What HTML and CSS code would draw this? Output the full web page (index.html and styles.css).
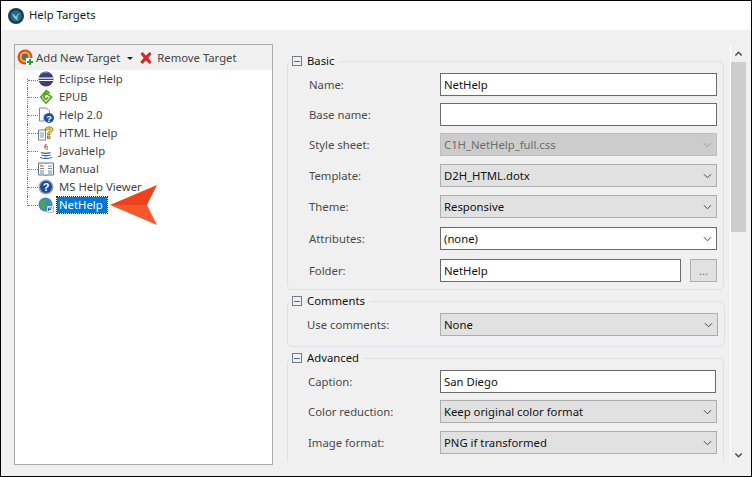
FILE: index.html
```html
<!DOCTYPE html>
<html lang="en">
<head>
<meta charset="utf-8">
<title>Help Targets</title>
<link rel="stylesheet" href="styles.css">
</head>
<body>
<div class="window">
  <header class="titlebar">
    <svg class="logo" viewBox="0 0 16 16"><circle cx="8" cy="8" r="8" fill="#123f5e"/><circle cx="8" cy="8" r="5.6" fill="#2a6a80"/><path d="M4 5.500C5 9 7 11.500 10 12.500 8.600 9.500 9.500 7 12.500 5 10 5.500 8.600 7 8 8.800 7 7.500 5.500 6 4 5.500Z" fill="#8fd0c4"/></svg>
    <span class="title-text">Help Targets</span>
  </header>
  <main class="content">
    <section class="targets">
      <div class="toolbar">
        <svg class="tool-add" viewBox="0 0 18 18"><circle cx="8" cy="8" r="7.500" fill="#d9482a"/><circle cx="8" cy="8" r="5.400" fill="#f3b82c"/><circle cx="8" cy="8" r="3.400" fill="#6b6a62"/><rect x="9" y="9" width="8" height="8" fill="#fff"/><path d="M12 10h2v2h2v2h-2v2h-2v-2h-2v-2h2z" fill="#22a32a"/></svg>
        <span class="tool-label">Add New Target</span>
        <span class="caret"></span>
        <svg class="tool-del" viewBox="0 0 14 14"><path d="M1.500 3 3.500 1 7 4.500 10.500 1 12.500 3 9.300 7l3.400 4-2.200 2L7 9.600 3.500 13 1.200 11l3.500-4Z" fill="#cf2b27"/></svg>
        <span class="tool-label">Remove Target</span>
      </div>
      <ul class="tree">
        <li class="node node-first"><i class="branch"></i>
          <svg class="ico" viewBox="0 0 16 16"><circle cx="8" cy="8" r="7.500" fill="#3f3c80"/><path d="M.6 6.500h14.800v1.200H.6zM.6 9h14.800v1.100H.6z" fill="#fff"/><path d="M3 3a7 7 0 0 1 10 0c-3-1.400-7-1.400-10 0Z" fill="#8c8ac4"/></svg>
          <span class="node-text">Eclipse Help</span></li>
        <li class="node"><i class="branch"></i>
          <svg class="ico" viewBox="0 0 16 16"><path d="M12 4 8 1.800 2.800 8 8 14.200 13.600 8 8 3.800 5.600 8 8 10.600 10.400 8" fill="none" stroke="#5aa51f" stroke-width="1.700"/></svg>
          <span class="node-text">EPUB</span></li>
        <li class="node"><i class="branch"></i>
          <svg class="ico" viewBox="0 0 16 16"><path d="M1.500 1h7l3 3v4H6v6H1.500Z" fill="#fff" stroke="#7c8aa0"/><circle cx="11" cy="11" r="5" fill="#1d4fa8"/><text x="11" y="14.500" class="q">?</text></svg>
          <span class="node-text">Help 2.0</span></li>
        <li class="node"><i class="branch"></i>
          <svg class="ico" viewBox="0 0 16 16"><path d="M.500 5h7v10h-7Z" fill="#fff" stroke="#6f7f92"/><path d="M2 8h4M2 10h4M2 12h4" stroke="#8090a0"/><path d="M7 4.500C7 1.500 15 .5 15 4.500c0 2.500-3 2.500-3 5H9.500C9.500 6.500 12 6 12 4.500 12 3.500 9.800 3.500 9.500 5Z" fill="#f0d23a" stroke="#6a5c14" stroke-width=".7"/><rect x="9.500" y="11" width="2.500" height="2.500" fill="#f0d23a" stroke="#6a5c14" stroke-width=".7"/></svg>
          <span class="node-text">HTML Help</span></li>
        <li class="node"><i class="branch"></i>
          <svg class="ico" viewBox="0 0 16 16"><path d="M8 .5C10 3 6 4 8 7 6 5 5.500 3.500 8 .5Z" fill="#d7402a"/><path d="M9.500 3C9 5 8.500 5.500 9.500 7" stroke="#d7402a" fill="none"/><path d="M3 9.500c3 1 7 1 9.500 0M3.500 12c3 1 6 1 9 0M2 14.500c4 1.200 8 1.200 12 0" stroke="#2c62b4" stroke-width="1.300" fill="none"/></svg>
          <span class="node-text">JavaHelp</span></li>
        <li class="node"><i class="branch"></i>
          <svg class="ico" viewBox="0 0 16 16"><path d="M.500 2h7l.5 1 .5-1h7v12h-7l-.5 1-.5-1h-7Z" fill="#fff" stroke="#5d708a"/><path d="M2 5h4M2 7.500h4M2 10h4M2 12h4M10 5h4M10 7.500h4M10 10h4M10 12h4" stroke="#6f86a2"/><rect x="2" y="3.500" width="2.500" height="2.500" fill="#eda63a"/></svg>
          <span class="node-text">Manual</span></li>
        <li class="node"><i class="branch"></i>
          <svg class="ico" viewBox="0 0 16 16"><circle cx="8" cy="8" r="7.500" fill="#9aa3b0"/><circle cx="8" cy="8" r="6" fill="#1c4aa0"/><text x="8" y="12" class="q q-big">?</text></svg>
          <span class="node-text">MS Help Viewer</span></li>
        <li class="node node-last"><i class="branch"></i>
          <svg class="ico" viewBox="0 0 16 16"><circle cx="7.500" cy="7.500" r="7" fill="#3f88c8"/><path d="M3 2.500c3-1.500 5 0 5 1.500S5 6 6 8s2 2 1.500 5C4 12 2.500 9.500 2 7.500Z" fill="#4fa83c"/><path d="M11 3c2 1 3 3 2.500 4.500-2 0-3-2-2.500-4.500Z" fill="#4fa83c"/><rect x="9" y="9" width="6.500" height="6.500" rx="1" fill="#fff" stroke="#7c8a9a" stroke-width=".6"/><path d="M10.500 11h3.500M10.500 12.500h2.500M10.500 11v3" stroke="#2869b4"/></svg>
          <span class="node-text node-selected">NetHelp</span></li>
      </ul>
    </section>
    <section class="props">
      <div class="props-scroll">
        <fieldset class="group">
          <legend class="legend"><i class="collapse"></i>Basic</legend>
          <div class="form form-basic">
            <label class="lbl">Name:</label><div class="field input">NetHelp</div>
            <label class="lbl">Base name:</label><div class="field input"></div>
            <label class="lbl">Style sheet:</label><div class="field select disabled">C1H_NetHelp_full.css<svg class="chev" viewBox="0 0 10 6"><path d="M1 1l4 4 4-4"/></svg></div>
            <label class="lbl">Template:</label><div class="field select">D2H_HTML.dotx<svg class="chev" viewBox="0 0 10 6"><path d="M1 1l4 4 4-4"/></svg></div>
            <label class="lbl">Theme:</label><div class="field select">Responsive<svg class="chev" viewBox="0 0 10 6"><path d="M1 1l4 4 4-4"/></svg></div>
            <label class="lbl">Attributes:</label><div class="field input">(none)<svg class="chev" viewBox="0 0 10 6"><path d="M1 1l4 4 4-4"/></svg></div>
            <label class="lbl">Folder:</label>
            <div class="folder"><div class="field input folder-input">NetHelp</div><div class="browse">...</div></div>
          </div>
        </fieldset>
        <fieldset class="group">
          <legend class="legend"><i class="collapse"></i>Comments</legend>
          <div class="form form-comments">
            <label class="lbl">Use comments:</label><div class="field select">None<svg class="chev" viewBox="0 0 10 6"><path d="M1 1l4 4 4-4"/></svg></div>
          </div>
        </fieldset>
        <fieldset class="group">
          <legend class="legend"><i class="collapse"></i>Advanced</legend>
          <div class="form form-advanced">
            <label class="lbl">Caption:</label><div class="field input field-short">San Diego</div>
            <label class="lbl">Color reduction:</label><div class="field select">Keep original color format<svg class="chev" viewBox="0 0 10 6"><path d="M1 1l4 4 4-4"/></svg></div>
            <label class="lbl">Image format:</label><div class="field select">PNG if transformed<svg class="chev" viewBox="0 0 10 6"><path d="M1 1l4 4 4-4"/></svg></div>
            <label class="lbl"></label><div class="field select"></div>
          </div>
        </fieldset>
      </div>
      <div class="scrollbar">
        <svg class="sb-arrow" viewBox="0 0 8 6"><path d="M.8 5 4 1.800 7.200 5"/></svg>
        <div class="sb-track"><div class="sb-thumb"></div></div>
        <svg class="sb-arrow" viewBox="0 0 8 6"><path d="M.8 1 4 4.200 7.200 1"/></svg>
      </div>
    </section>
  </main>
  <svg class="pointer" viewBox="0 0 47 40"><path d="M0 20 47 0 37 20Z" fill="#e8431c"/><path d="M0 20 47 40 37 20Z" fill="#f6582c"/></svg>
</div>
</body>
</html>
```
FILE: styles.css
```css
* { box-sizing: border-box; }
html, body { margin: 0; padding: 0; }
body {
  width: 752px;
  height: 477px;
  overflow: hidden;
  font-family: "Noto Sans", "Open Sans", sans-serif;
  font-size: 11.3px;
  color: #000;
}
.window {
  position: relative;
  width: 752px;
  height: 477px;
  border: 1px solid #000;
  background: #f0f0f0;
  display: flex;
  flex-direction: column;
}
.titlebar {
  height: 29px;
  flex: none;
  background: #fff;
  display: flex;
  align-items: center;
  gap: 5px;
  padding-left: 7px;
  color: #1a1a1a;
}
.title-text { padding-bottom: 2px; }
.logo { width: 16px; height: 16px; }
.content {
  flex: 1;
  display: flex;
  padding: 14px 4px 11px 13px;
  gap: 14px;
}
.targets {
  width: 259px;
  flex: none;
  background: #fff;
  border: 1px solid #a9a9a9;
  display: flex;
  flex-direction: column;
}
.toolbar {
  height: 25px;
  flex: none;
  background: #f0f0f0;
  display: flex;
  align-items: center;
  padding-left: 2px;
  color: #444;
}
.tool-add { width: 18px; height: 18px; margin-right: 1px; }
.caret {
  width: 0;
  height: 0;
  margin: 1px 6px 0 7px;
  border-left: 3.5px solid transparent;
  border-right: 3.5px solid transparent;
  border-top: 3.5px solid #222;
}
.tool-del { width: 14px; height: 14px; margin-right: 4px; }
.tree {
  list-style: none;
  margin: 0;
  padding: 0 0 0 12px;
}
.node {
  height: 18px;
  display: flex;
  align-items: center;
  color: #444;
}
.branch {
  width: 11px;
  height: 18px;
  flex: none;
  border-left: 1px dotted #777;
}
.branch::after {
  content: "";
  display: block;
  height: 9px;
  border-bottom: 1px dotted #777;
}
.node-first .branch { height: 9px; align-self: flex-end; }
.node-first .branch::after { height: 1px; }
.node-last .branch { height: 10px; align-self: flex-start; }
.ico { width: 16px; height: 16px; flex: none; margin-right: 3px; }
.q { font: bold 9px "Liberation Sans", sans-serif; fill: #fff; text-anchor: middle; }
.q-big { font-size: 11px; }
.node-text { padding: 0 2px; line-height: 16px; }
.node-selected {
  background: #0078d7;
  color: #fff;
  outline: 1px dotted #3a2a00;
  width: 50px;
}
.props {
  width: 460px;
  flex: none;
  display: flex;
}
.props-scroll {
  width: 444px;
  height: 418px;
  overflow: hidden;
  border-right: 1px solid #fff;
  padding-top: 9px;
  display: flex;
  flex-direction: column;
  flex: none;
}
.group {
  width: 437px;
  margin: 0 0 3px;
  padding: 0 6px 0 21px;
  border: 1px solid #d9e1ea;
  border-radius: 5px;
  flex: none;
}
.legend {
  display: flex;
  align-items: center;
  padding: 0 5px 0 2px;
  margin-left: -19px;
  line-height: 16px;
  height: 16px;
  color: #111;
}
.collapse {
  width: 10px;
  height: 10px;
  margin-right: 5px;
  border: 1px solid #6d7c8e;
  background: linear-gradient(#5a6a80, #5a6a80) center / 6px 1px no-repeat;
}
.form {
  display: grid;
  grid-template-columns: 131px 277px;
  align-items: start;
  row-gap: 7px;
  margin: 4px 0 0;
}
.form-basic { grid-template-rows: 23px 23px 24px 24px 25px 25px 23px; margin-bottom: 7px; }
.form-comments { grid-template-columns: 133px 278px; margin: 4px 0 10px -2px; }
.form-advanced { grid-template-columns: 132px 277px; grid-template-rows: 23px 24px 24px 23px; margin-left: -1px; }
.lbl { color: #4a4a4a; line-height: 23px; }
.field {
  height: 23px;
  display: flex;
  align-items: center;
  justify-content: space-between;
  padding: 0 4px 1px 3px;
  color: #111;
}
.field-short { width: 276px; }
.input { background: #fff; border: 1px solid #6a6a6a; }
.select { background: #e1e1e1; border: 1px solid #adadad; }
.disabled { background: #ccc; border-color: #bfbfbf; color: #6d6d6d; }
.chev { width: 9px; height: 6px; margin-top: 1px; fill: none; stroke: #444; stroke-width: 1.100; }
.disabled .chev { stroke: #a0a0a0; }
.folder { display: flex; justify-content: space-between; }
.folder-input { width: 241px; }
.browse {
  width: 27px;
  height: 23px;
  background: #e1e1e1;
  border: 1px solid #adadad;
  color: #6a7280;
  text-align: center;
  line-height: 21px;
}
.scrollbar {
  width: 15px;
  height: 420px;
  padding-top: 1px;
  display: flex;
  flex-direction: column;
}
.sb-arrow { height: 17px; width: 15px; flex: none; padding: 5px 3.500px; fill: none; stroke: #505050; stroke-width: 1.600; }
.sb-track { flex: 1; }
.sb-thumb { height: 170px; background: #cdcdcd; }
.pointer {
  position: absolute;
  left: 109px;
  top: 184px;
  width: 47px;
  height: 40px;
}
```
